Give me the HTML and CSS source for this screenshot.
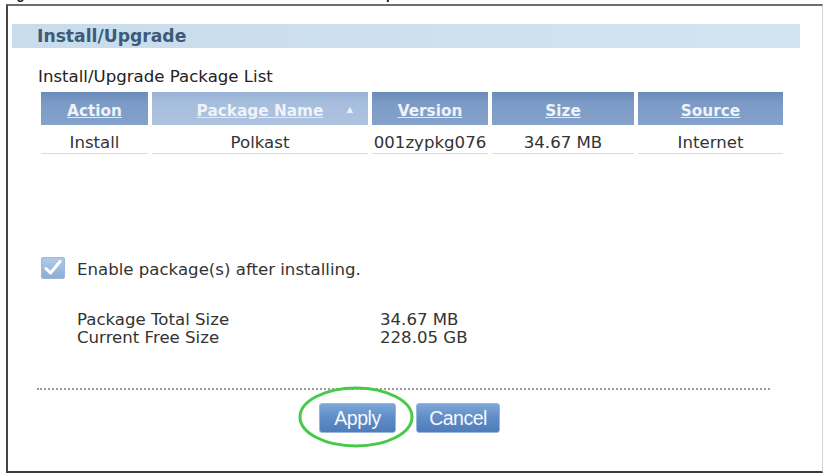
FILE: index.html
```html
<!DOCTYPE html>
<html lang="en">
<head>
  <meta charset="UTF-8">
  <title>Install/Upgrade</title>
  <link rel="stylesheet" href="styles.css">
</head>
<body>

<!-- figure caption, mostly cut off at the top -->
<div class="caption"><p>Figure 198&nbsp;&nbsp;&nbsp;Install/Uninstall the Selected Add-on Items: Example</p></div>

<div class="frame">
  <div class="band">Install/Upgrade</div>

  <div class="list-title">Install/Upgrade Package List</div>

  <table class="pkg-table">
    <thead>
      <tr>
        <th class="c-action"><a>Action</a></th>
        <th class="c-name sorted"><a>Package Name</a><span class="sort-arrow">&#9650;</span></th>
        <th class="c-ver"><a>Version</a></th>
        <th class="c-size"><a>Size</a></th>
        <th class="c-src"><a>Source</a></th>
      </tr>
    </thead>
    <tbody>
      <tr>
        <td>Install</td>
        <td>Polkast</td>
        <td>001zypkg076</td>
        <td>34.67 MB</td>
        <td>Internet</td>
      </tr>
    </tbody>
  </table>

  <label class="check-row">
    <svg class="check-box" width="24" height="22" viewBox="0 0 24 22">
      <defs>
        <linearGradient id="cb" x1="0" y1="0" x2="0" y2="1">
          <stop offset="0" stop-color="#b3cbe8"/>
          <stop offset="1" stop-color="#8cacd6"/>
        </linearGradient>
      </defs>
      <rect x="0.5" y="0.5" width="23" height="21" rx="1.5" fill="url(#cb)" stroke="#9fb8da"/>
      <path d="M5 11.5 L9.5 16 L19 4.5" fill="none" stroke="#fff" stroke-width="3" stroke-linecap="round" stroke-linejoin="round"/>
    </svg>
    <span>Enable package(s) after installing.</span>
  </label>

  <div class="sizes">
    <div class="size-row"><span class="size-key">Package Total Size</span><span>34.67 MB</span></div>
    <div class="size-row"><span class="size-key">Current Free Size</span><span>228.05 GB</span></div>
  </div>

  <div class="divider"></div>

  <div class="buttons">
    <div class="btn-wrap">
      <button class="btn">Apply</button>
      <svg class="ring" width="118" height="62" viewBox="0 0 118 62">
        <ellipse cx="59" cy="31" rx="56" ry="29" fill="none" stroke="#47c94a" stroke-width="3"/>
      </svg>
    </div>
    <button class="btn">Cancel</button>
  </div>
</div>

</body>
</html>
```

FILE: styles.css
```css
* {
  margin: 0;
  padding: 0;
  box-sizing: border-box;
}

body {
  background: #fff;
  font-family: "DejaVu Sans", Verdana, sans-serif;
  font-size: 16.6px;
  color: #333;
}

.caption {
  height: 4px;
  overflow: hidden;
}

.caption p {
  margin: -12px 0 0 5px;
  font-family: "Liberation Sans", Arial, sans-serif;
  font-weight: bold;
  font-size: 13px;
  line-height: 14px;
  color: #111;
  white-space: nowrap;
}

.frame {
  margin-left: 6px;
  width: 817px;
  height: 469px;
  border-top: 2px solid #6e6e6e;
  border-left: 2px solid #444;
  border-bottom: 2px solid #3a3a3a;
  border-right: 1px solid #d4d4d4;
}

.band {
  margin: 18px 0 0 4px;
  width: 788px;
  height: 24px;
  line-height: 24px;
  padding-left: 25px;
  background: linear-gradient(to right, #c9dcec, #d3e4f1);
  color: #3d5b77;
  font-weight: bold;
  font-size: 17.2px;
}

.list-title {
  margin: 19px 0 0 30px;
  height: 20px;
  line-height: 20px;
  color: #222;
}

.pkg-table {
  margin: 5px 0 0 29px;
  border-collapse: separate;
  border-spacing: 4px 0;
}

.pkg-table th {
  position: relative;
  height: 33px;
  padding: 9px 0 4px;
  line-height: 20px;
  font-size: 15.3px;
  font-weight: bold;
  text-align: center;
  background: linear-gradient(to bottom, #6a8bba, #7b9ac5 30%, #84a2ca);
}

.pkg-table th a {
  color: #eef3fa;
  text-decoration: underline;
  text-decoration-color: #dfe8f4;
}

.pkg-table th.sorted {
  background: linear-gradient(to bottom, #98b2d6, #a6bddc 30%, #aec3e0);
}

.sort-arrow {
  position: absolute;
  top: 8px;
  right: 15px;
  font-size: 8px;
  color: #eef3fa;
}

.c-action { width: 107px; }
.c-name { width: 216px; }
.c-ver { width: 116px; }
.c-size { width: 142px; }
.c-src { width: 145px; }

.pkg-table td {
  height: 29px;
  padding: 8px 0 0;
  line-height: 20px;
  text-align: center;
  border-bottom: 1px solid #dcdcdc;
  color: #333;
}

.check-row {
  display: flex;
  align-items: center;
  gap: 12px;
  margin: 102px 0 0 33px;
  height: 24px;
}

.check-row span {
  padding-top: 3px;
  line-height: 20px;
}

.sizes {
  margin: 31px 0 0 69px;
  line-height: 18px;
}

.size-row {
  display: flex;
}

.size-key {
  width: 303px;
}

.divider {
  margin: 41px 0 0 29px;
  width: 733px;
  border-top: 2px dotted #9a9a9a;
}

.buttons {
  display: flex;
  justify-content: center;
  gap: 20px;
  margin: 13px 0 0 35px;
  width: 733px;
}

.btn-wrap {
  position: relative;
}

.btn {
  height: 30px;
  padding: 0 11px;
  border: 1px solid #9ab6dc;
  border-radius: 3px;
  background: linear-gradient(to bottom, #7ea6d8, #5f8cc6 50%, #4f7dbb);
  color: #f4f8fd;
  font-family: "Liberation Sans", Arial, sans-serif;
  font-size: 19.5px;
  letter-spacing: -0.5px;
  cursor: pointer;
}

.btn-wrap .btn {
  width: 77px;
}

.buttons > .btn {
  width: 84px;
}

.ring {
  position: absolute;
  left: -22px;
  top: -17px;
}
```
